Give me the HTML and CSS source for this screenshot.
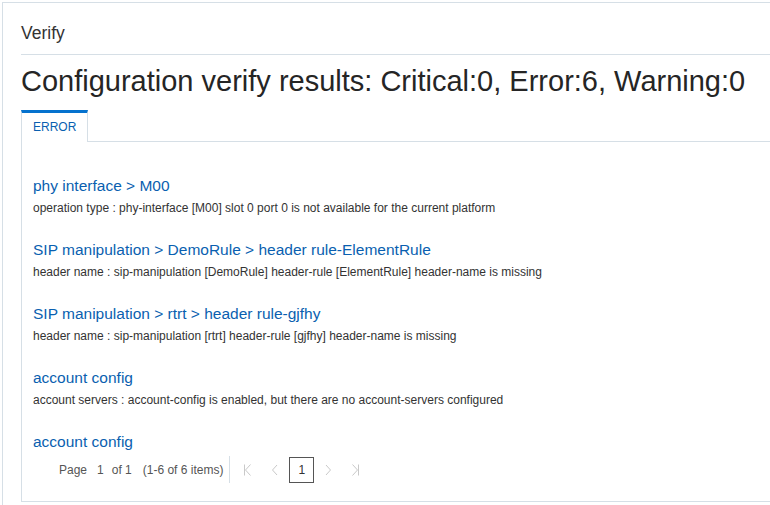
FILE: index.html
```html
<!DOCTYPE html>
<html>
<head>
<meta charset="utf-8">
<link rel="stylesheet" href="styles.css">
</head>
<body>
<div class="dialog">
  <div class="dialog-header">Verify</div>
  <h1 class="title">Configuration verify results: Critical:0, Error:6, Warning:0</h1>
  <div class="tabbar">
    <div class="tab">ERROR</div>
  </div>
  <div class="panel">
    <div class="item">
      <a class="item-link">phy interface &gt; M00</a>
      <div class="item-desc">operation type : phy-interface [M00] slot 0 port 0 is not available for the current platform</div>
    </div>
    <div class="item">
      <a class="item-link">SIP manipulation &gt; DemoRule &gt; header rule-ElementRule</a>
      <div class="item-desc">header name : sip-manipulation [DemoRule] header-rule [ElementRule] header-name is missing</div>
    </div>
    <div class="item">
      <a class="item-link">SIP manipulation &gt; rtrt &gt; header rule-gjfhy</a>
      <div class="item-desc">header name : sip-manipulation [rtrt] header-rule [gjfhy] header-name is missing</div>
    </div>
    <div class="item">
      <a class="item-link">account config</a>
      <div class="item-desc">account servers : account-config is enabled, but there are no account-servers configured</div>
    </div>
    <div class="item last">
      <a class="item-link">account config</a>
    </div>
    <div class="pager">
      <div class="pager-info">
        <span class="p-label">Page</span>
        <span class="p-num">1</span>
        <span class="p-of">of 1</span>
        <span class="p-items">(1-6 of 6 items)</span>
      </div>
      <div class="pager-nav">
        <span class="p-btn"><svg width="10" height="12" viewBox="0 0 10 12"><path d="M1.5 0.5V11.5M7.5 0.5L2.5 6L7.5 11.5" fill="none" stroke="#c9c9c9" stroke-width="1"/></svg></span>
        <span class="p-btn"><svg width="8" height="12" viewBox="0 0 8 12"><path d="M6 1L1.5 6L6 11" fill="none" stroke="#c9c9c9" stroke-width="1"/></svg></span>
        <span class="p-page">1</span>
        <span class="p-btn"><svg width="8" height="12" viewBox="0 0 8 12"><path d="M2 1L6.5 6L2 11" fill="none" stroke="#c9c9c9" stroke-width="1"/></svg></span>
        <span class="p-btn"><svg width="10" height="12" viewBox="0 0 10 12"><path d="M8.5 0.5V11.5M2.5 0.5L7.5 6L2.5 11.5" fill="none" stroke="#c9c9c9" stroke-width="1"/></svg></span>
      </div>
    </div>
  </div>
</div>
</body>
</html>
```
FILE: styles.css
```css
html, body {
  margin: 0;
  padding: 0;
  background: #ffffff;
  overflow: hidden;
  width: 770px;
  height: 505px;
}
body {
  font-family: "Liberation Sans", Arial, sans-serif;
  color: #333333;
}
.dialog {
  margin: 2px 0 0 2px;
  width: 820px;
  height: 560px;
  border: 1px solid #d6dfe6;
  padding: 0 18px;
  box-sizing: content-box;
}
.dialog-header {
  font-size: 17.5px;
  line-height: 20px;
  padding: 20px 0 11px;
  border-bottom: 1px solid #d6dfe6;
  color: #333333;
}
.title {
  margin: 9px 0 0;
  font-size: 29px;
  line-height: 34px;
  font-weight: normal;
  color: #252525;
  white-space: nowrap;
}
.tabbar {
  display: flex;
  margin-top: 12px;
  border-bottom: 1px solid #d6dfe6;
}
.tab {
  font-size: 12px;
  line-height: 14px;
  padding: 7px 11px 8px;
  border-top: 3px solid #0572ce;
  border-left: 1px solid #d6dfe6;
  border-right: 1px solid #d6dfe6;
  background: #ffffff;
  margin-bottom: -1px;
  color: #0a5fb0;
}
.panel {
  border: 1px solid #d6dfe6;
  border-top: none;
  padding: 34px 11px 18px;
}
.item {
  display: flex;
  flex-direction: column;
  gap: 5px;
  margin-bottom: 25px;
}
.item.last {
  margin-bottom: 4px;
}
.item-link {
  font-size: 15.5px;
  line-height: 20px;
  color: #0a5fb0;
  white-space: nowrap;
}
.item-desc {
  font-size: 12px;
  line-height: 14px;
  color: #333333;
  white-space: nowrap;
}
.pager {
  display: flex;
  align-items: center;
  margin-left: 26px;
  height: 27px;
}
.pager-info {
  display: flex;
  align-items: center;
  font-size: 12px;
  line-height: 14px;
  color: #555555;
  padding-right: 6px;
  height: 27px;
  border-right: 1px solid #d6dfe6;
}
.p-num { margin-left: 10px; }
.p-of { margin-left: 8px; }
.p-items { margin-left: 11px; }
.pager-nav {
  display: flex;
  align-items: center;
  gap: 1px;
  margin-left: 5px;
}
.p-btn {
  width: 26px;
  height: 26px;
  display: flex;
  align-items: center;
  justify-content: center;
}
.p-page {
  width: 23px;
  height: 24px;
  border: 1px solid #555555;
  display: flex;
  align-items: center;
  justify-content: center;
  font-size: 12px;
  color: #333333;
}
```
